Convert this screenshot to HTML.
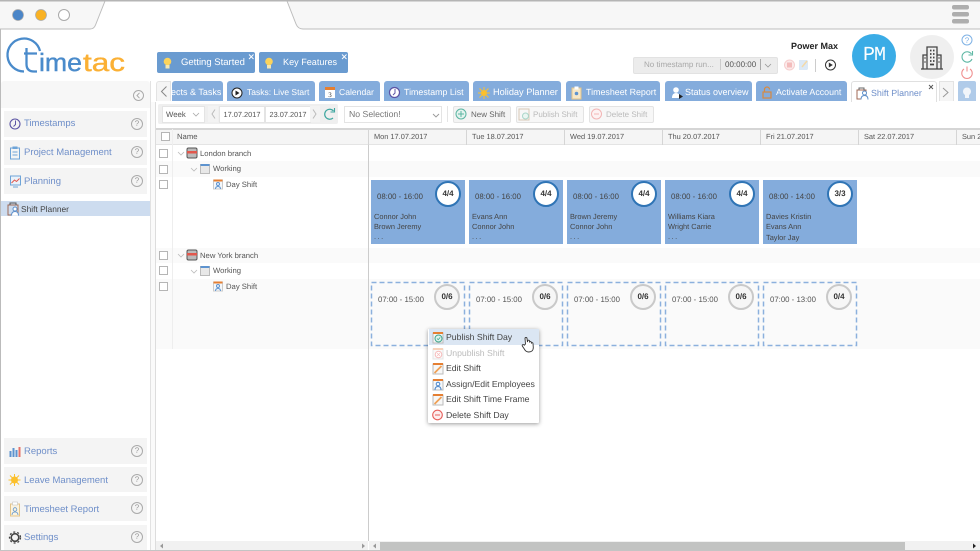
<!DOCTYPE html>
<html><head><meta charset="utf-8"><style>
html,body{margin:0;padding:0;background:#fff}
#p{position:relative;width:980px;height:551px;overflow:hidden;background:#fff;font-family:"Liberation Sans",sans-serif;font-size:9px;color:#555;text-rendering:geometricPrecision;filter:blur(.3px)}
#p div,#p span.a,#p svg{position:absolute}
.t{white-space:nowrap;line-height:12px}
.tab{top:81px;height:20px;background:#84acdc;border-radius:3px 3px 0 0;color:#fff;font-size:9px;line-height:22px;white-space:nowrap;overflow:hidden}
.side{left:4px;width:143px;background:#f4f4f4}
.side .l{left:20px;top:0;color:#6f8fc9;font-size:9.5px;white-space:nowrap}
.q{left:127px;width:10px;height:10px;border:1px solid #aaa;border-radius:50%;color:#999;font-size:8px;line-height:10px;text-align:center}
.cb{left:159px;width:7px;height:7px;border:1px solid #b5b5b5;background:#fff}
.hd{top:129px;height:16px;border-left:1px solid #d5d5d5;line-height:16px;font-size:7.4px;padding-left:5px;color:#555;white-space:nowrap}
.sb{top:180px;width:94px;height:64px;background:#84acdc;color:#444}
.sd{top:282px;width:94px;height:64px;color:#555}
.tm{left:6px;top:12px;font-size:7.8px;white-space:nowrap}
.sd .tm{left:7px;top:13px}
.bd{left:64px;top:1px;width:22px;height:22px;border:2px solid #2f74b5;border-radius:50%;background:#fff;font-weight:bold;font-size:8px;line-height:22px;text-align:center;color:#333}
.sd .bd{left:63px;top:2px;border:2px solid #c9c9c9;background:#f6f6f6}
.nm{left:3px;font-size:7.4px;white-space:nowrap;line-height:11px}
.mi{left:446px;font-size:8.7px;white-space:nowrap;color:#444;line-height:12px}
.btn{top:106px;height:15px;border:1px solid #e3e3e3;background:#f7f7f7;border-radius:2px;line-height:15px;font-size:8px;white-space:nowrap;color:#bbb}
.tr{font-size:7.7px}
</style></head><body><div id="p">

<!-- browser chrome -->
<svg style="left:0;top:0" width="980" height="31">
<rect width="980" height="30" fill="#fff"/>
<path d="M0 0H105L95 25Q94 29 90 29H0Z" fill="#f7f7f7"/>
<path d="M287 0L296 24Q298 29 303 29H980V0Z" fill="#f7f7f7"/>
<path d="M105 1L95.500 25Q94 29 90 29H0M287 1L296 24Q298 29 303 29H980" fill="none" stroke="#bdbdbd"/>
<rect width="980" height="1.500" fill="#b5b5b5"/>
<circle cx="18" cy="15" r="5.500" fill="#4b86c8" stroke="#aaa" stroke-width=".7"/>
<circle cx="41" cy="15" r="5.500" fill="#f9b224" stroke="#aaa" stroke-width=".7"/>
<circle cx="64" cy="15" r="5.500" fill="#fff" stroke="#aaa"/>
<rect x="952" y="5" width="17" height="4.500" rx="2" fill="#aeaeae"/><rect x="952" y="12" width="17" height="4.500" rx="2" fill="#aeaeae"/><rect x="952" y="19" width="17" height="4.500" rx="2" fill="#aeaeae"/>
</svg>
<div style="left:0;top:29px;width:1px;height:522px;background:#bbb"></div>

<!-- logo -->
<svg style="left:0;top:30px" width="135" height="50">
<path d="M24 41.500A16.500 16.500 0 1 1 40 21" fill="none" stroke="#4a8bcb" stroke-width="2.300"/>
<path d="M26.500 18V34Q26.500 41.500 34 41.500H37M24 23.500H37" fill="none" stroke="#4a8bcb" stroke-width="2.300"/>
<text x="39" y="41" font-family="Liberation Sans" font-size="25" fill="#4a8bcb" stroke="#4a8bcb" stroke-width=".4" textLength="43" lengthAdjust="spacingAndGlyphs">ime</text>
<text x="83" y="41" font-family="Liberation Sans" font-size="25" fill="#fbb034" stroke="#fbb034" stroke-width=".4" textLength="42" lengthAdjust="spacingAndGlyphs">tac</text>
</svg>

<!-- tips -->
<div class="tab" style="left:157px;top:52px;width:98px;height:21px;background:#6a9bd0;border-radius:2px;line-height:21px;font-size:9.5px"><span class="a" style="left:24px">Getting Started</span></div>
<div class="tab" style="left:259px;top:52px;width:89px;height:21px;background:#6a9bd0;border-radius:2px;line-height:21px;font-size:9.1px"><span class="a" style="left:24px">Key Features</span></div>
<svg style="left:157px;top:52px" width="195" height="21"><circle cx="10.500" cy="9.500" r="3.800" fill="#fbd35b"/><rect x="8.500" y="13" width="4" height="3.500" fill="#f5e7b0"/><circle cx="112" cy="9.500" r="3.800" fill="#fbd35b"/><rect x="110" y="13" width="4" height="3.500" fill="#f5e7b0"/><path d="M92 2.500l4.500 4.500m0-4.500L92 7M185 2.500l4.500 4.500m0-4.500L185 7" stroke="#fff" stroke-width=".9"/></svg>

<!-- timer -->
<div style="left:633px;top:57px;width:143px;height:15px;background:#ececec;border:1px solid #e2e2e2;border-radius:2px"></div>
<div class="t" style="left:644px;top:59px;font-size:8px;color:#a9a9a9">No timestamp run...</div>
<div class="t" style="left:725px;top:59px;font-size:8px;color:#555">00:00:00</div>
<div style="left:720px;top:59px;width:1px;height:11px;background:#ccc"></div><div style="left:760px;top:59px;width:1px;height:11px;background:#aaa"></div>
<svg style="left:762px;top:58px" width="60" height="16"><path d="M3 6l3 3 3-3" fill="none" stroke="#999" stroke-width=".8"/></svg>
<svg style="left:782px;top:56px" width="60" height="18">
<circle cx="7.500" cy="9" r="5" fill="#fbeaea" stroke="#f6cfcf"/><rect x="5" y="6.500" width="5" height="5" fill="#f3bcbc"/>
<path d="M17 4h8l1 1v8l-1 1h-8z" fill="#dce9f6"/><path d="M20 11l5-6" stroke="#f4d9a8" stroke-width="1.500"/>
<path d="M33.500 3v13" stroke="#ccc"/>
<circle cx="48.500" cy="9" r="5" fill="#fff" stroke="#333"/><path d="M46.800 6.500l4 2.500-4 2.500z" fill="#333"/>
</svg>
<div class="t" style="left:791px;top:40px;font-weight:bold;font-size:9px;color:#222">Power Max</div>
<div style="left:852px;top:34px;width:44px;height:44px;border-radius:50%;background:#3aace6;color:#fff;font-family:'Liberation Mono',monospace;font-size:20px;line-height:44px;text-align:center;letter-spacing:-1px">PM</div>
<div style="left:910px;top:35px;width:44px;height:44px;border-radius:50%;background:#efefef"></div>
<svg style="left:910px;top:35px" width="44" height="44" fill="none" stroke="#444" stroke-width="1.300"><path d="M13 34V20H17M31 34V20H27M17 34V12H27V34M11 34H33"/><path d="M20 15.500h1.500M23 15.500h1.500M20 19h1.500M23 19h1.500M20 22.500h1.500M23 22.500h1.500M20 26h1.500M23 26h1.500M14.500 23h1M14.500 27h1M28.500 23h1M28.500 27h1M20 29.500h4" stroke-width="1.800"/></svg>
<svg style="left:958px;top:32px" width="20" height="50" fill="none">
<circle cx="9" cy="8" r="5" stroke="#7fb2e5"/><text x="9" y="10.800" font-size="8" font-family="Liberation Sans" fill="#7fb2e5" text-anchor="middle">?</text>
<path d="M13.500 22A5.200 5.200 0 1 0 14 27" stroke="#5fb8a5" stroke-width="1.100"/><path d="M14.500 19v4h-4" stroke="#5fb8a5" stroke-width="1.100"/>
<path d="M6 37A5.200 5.200 0 1 0 12 37M9 34.500v5" stroke="#ef8f8f" stroke-width="1.100"/>
</svg>

<!-- tabs -->
<div class="tab" style="left:172px;width:51px"><span class="a" style="left:-1px">ects &amp; Tasks</span></div>
<div style="left:156px;top:81px;width:15px;height:20px;background:#f5f5f5;border:1px solid #e3e3e3;border-bottom:0;box-sizing:border-box;border-radius:3px 0 0 0"></div>
<svg style="left:156px;top:81px" width="15" height="20"><path d="M10.500 5.500L5.500 10.500l5 5" fill="none" stroke="#888"/></svg>
<div class="tab" style="left:227px;width:88px;font-size:8.500px"><span class="a" style="left:20px">Tasks: Live Start</span></div>
<div class="tab" style="left:319px;width:61px;font-size:8.600px"><span class="a" style="left:20px">Calendar</span></div>
<div class="tab" style="left:384px;width:85px;font-size:8.850px"><span class="a" style="left:20px">Timestamp List</span></div>
<div class="tab" style="left:473px;width:88px;font-size:9.200px"><span class="a" style="left:20px">Holiday Planner</span></div>
<div class="tab" style="left:566px;width:94px;font-size:8.900px"><span class="a" style="left:20px">Timesheet Report</span></div>
<div class="tab" style="left:665px;width:87px"><span class="a" style="left:20px">Status overview</span></div>
<div class="tab" style="left:756px;width:91px;font-size:8.850px"><span class="a" style="left:20px">Activate Account</span></div>
<div style="left:851px;top:81px;width:86px;height:21px;background:#fff;border:1px solid #e0e0e0;border-bottom:0;box-sizing:border-box;border-radius:3px 3px 0 0"></div>
<div class="t" style="left:871px;top:87px;color:#6f8fc9;font-size:8.900px">Shift Planner</div>
<div style="left:939px;top:81px;width:15px;height:20px;background:#f5f5f5;border:1px solid #e3e3e3;border-bottom:0;box-sizing:border-box"></div>
<div style="left:958px;top:81px;width:18px;height:20px;background:#b0cbe9;border-radius:2px 2px 0 0"></div>
<svg style="left:150px;top:78px" width="830" height="26">
<circle cx="87" cy="15" r="5" fill="#fff" stroke="#222"/><path d="M85.500 12.500l4 2.500-4 2.500z" fill="#222"/>
<rect x="175" y="9" width="10" height="11" fill="#fff"/><rect x="175" y="9" width="10" height="3" fill="#e57f32"/><text x="180" y="19" font-size="7" font-family="Liberation Serif" fill="#333" text-anchor="middle">3</text>
<circle cx="244.500" cy="14.500" r="5" fill="#fff" stroke="#5c55a5" stroke-width="1.200"/><path d="M245 11v4l-2 2" stroke="#5c55a5" fill="none"/>
<circle cx="334" cy="15" r="3" fill="#fbc02d"/><path d="M334 9v12M328 15h12M329.500 10.500l9 9m0-9l-9 9" stroke="#fbc02d" stroke-width="1"/>
<g transform="translate(-3 0)"><rect x="425" y="10" width="9" height="11" fill="#f6e8c8" stroke="#e3c48a"/><rect x="427.500" y="8.500" width="4" height="3" fill="#fff"/><circle cx="429.500" cy="15.500" r="1.800" fill="#5d93cf"/></g>
<circle cx="526" cy="12" r="2.800" fill="#fff"/><path d="M522 20q0-5 4-5t4 5z" fill="#fff"/><path d="M529 16l4 2.500-4 2.500z" fill="#222"/>
<rect x="613" y="14" width="8" height="6" fill="none" stroke="#d8893f" stroke-width="1.200"/><path d="M614.500 14v-2.500a2.500 2.500 0 0 1 5 0" fill="none" stroke="#d8893f" stroke-width="1.200"/>
<path d="M707 21v-9h9v9z" fill="#fff" stroke="#a06a55"/><path d="M709 12v-2h5v2" fill="none" stroke="#666"/><circle cx="714.500" cy="15" r="2" fill="#fff" stroke="#5d8fcb"/><path d="M711 21.500q0-4 3.500-4t3.500 4" fill="#fff" stroke="#5d8fcb"/>
<path d="M793 10l5 4.500-5 4.500" fill="none" stroke="#999"/>
<path d="M779 7l4 4m0-4l-4 4" stroke="#555" stroke-width=".9"/>
<circle cx="817" cy="13.500" r="4" fill="#f1f5fa"/><rect x="815" y="17" width="4" height="3" fill="#f1f5fa"/>
</svg>

<!-- sidebar -->
<div style="left:1px;top:81px;width:149px;height:27px;background:#f7f7f7;border-radius:3px 3px 0 0"></div>
<div style="left:150px;top:81px;width:1px;height:470px;background:#e2e2e2"></div>
<div style="left:151px;top:102px;width:5px;height:449px;background:#fafafa"></div>
<div style="left:155px;top:102px;width:1px;height:449px;background:#ddd"></div>
<svg style="left:132px;top:89px" width="14" height="13"><circle cx="6.500" cy="6.500" r="5" fill="none" stroke="#aaa"/><path d="M7.500 3.800L5 6.500l2.500 2.700" fill="none" stroke="#aaa"/></svg>

<div class="side" style="top:111px;height:26px"><div class="l" style="line-height:26px">Timestamps</div><div class="q" style="top:7px">?</div></div>
<div class="side" style="top:140px;height:25px"><div class="l" style="line-height:26px">Project Management</div><div class="q" style="top:6px">?</div></div>
<div class="side" style="top:168px;height:26px"><div class="l" style="line-height:27px">Planning</div><div class="q" style="top:7px">?</div></div>
<div style="left:1px;top:201px;width:149px;height:15px;background:#cddcef"></div>
<div class="t" style="left:21px;top:203px;font-size:8.400px;color:#444">Shift Planner</div>
<div class="side" style="top:438px;height:26px"><div class="l" style="line-height:27px">Reports</div><div class="q" style="top:7px">?</div></div>
<div class="side" style="top:467px;height:25px"><div class="l" style="line-height:27px">Leave Management</div><div class="q" style="top:7px">?</div></div>
<div class="side" style="top:496px;height:25px"><div class="l" style="line-height:27px">Timesheet Report</div><div class="q" style="top:6px">?</div></div>
<div class="side" style="top:525px;height:26px"><div class="l" style="line-height:26px">Settings</div><div class="q" style="top:6px">?</div></div>
<svg style="left:0;top:100px" width="30" height="451" fill="none">
<circle cx="15" cy="24" r="5" stroke="#5c55a5" stroke-width="1.100"/><path d="M15.500 20.500v4l-2 2" stroke="#5c55a5"/>
<rect x="10.500" y="48" width="9" height="11" stroke="#6ea4d8"/><rect x="12.500" y="46.500" width="5" height="2.500" fill="#6ea4d8"/><path d="M12.500 52h5M12.500 55h5" stroke="#6ea4d8"/>
<rect x="10.500" y="76" width="10" height="9" fill="#eaf2fa" stroke="#6ea4d8"/><path d="M11.500 83l3-3 2 1.500 3-3" stroke="#e2574c"/><path d="M13 87h5" stroke="#6ea4d8"/>
<rect x="8" y="105" width="10" height="10" stroke="#a06a55"/><path d="M10 105v-2h6v2" stroke="#555"/><circle cx="15" cy="109" r="2" fill="#fff" stroke="#5d8fcb"/><path d="M11.500 115.500q0-4 3.500-4t3.500 4" fill="#fff" stroke="#5d8fcb"/>
<path d="M10.500 357v-6M16.500 357v-7M13.500 357v-9" stroke="#5d93cf" stroke-width="2"/><path d="M19.500 357v-10" stroke="#e5736a" stroke-width="2"/>
<circle cx="14.500" cy="380" r="3.500" fill="#fbc02d"/><path d="M14.500 374v12M8.500 380h12M10 375.500l9 9m0-9l-9 9" stroke="#fbc02d"/>
<rect x="10.500" y="404" width="9" height="12" fill="#fbf3df" stroke="#e3c48a"/><rect x="12.500" y="402" width="5" height="3" fill="#fff" stroke="#bbb" stroke-width=".5"/><circle cx="15" cy="409.500" r="1.800" stroke="#5d93cf" stroke-width=".8"/><path d="M12 415q0-3 3-3t3 3" stroke="#5d93cf" stroke-width=".8"/>
<circle cx="15" cy="437.500" r="3.800" stroke="#444" stroke-width="1.600"/><circle cx="15" cy="437.500" r="5.500" stroke="#444" stroke-width="1.300" stroke-dasharray="2 2"/>
</svg>

<!-- toolbar -->
<div style="left:158px;top:104px;width:180px;height:20px;background:#efefef;border-radius:2px"></div>
<div style="left:162px;top:106px;width:41px;height:15px;background:#fff;border:1px solid #e4e4e4;line-height:15px;font-size:7.800px;text-indent:3px;color:#555">Week</div>
<div style="left:208px;top:106px;width:10px;height:16px;background:#f3f3f3"></div>
<div style="left:219px;top:106px;width:44px;height:15px;background:#fff;border:1px solid #e4e4e4;line-height:15px;font-size:7.400px;text-align:center;color:#555">17.07.2017</div>
<div style="left:265px;top:106px;width:44px;height:15px;background:#fff;border:1px solid #e4e4e4;line-height:15px;font-size:7.400px;text-align:center;color:#555">23.07.2017</div>
<div style="left:310px;top:106px;width:10px;height:16px;background:#f3f3f3"></div>
<div style="left:344px;top:106px;width:96px;height:15px;background:#fff;border:1px solid #e4e4e4;line-height:15px;font-size:8.700px;text-indent:4px;color:#777">No Selection!</div>
<div style="left:447px;top:106px;width:1px;height:16px;background:#e5e5e5"></div>
<div class="btn" style="left:453px;width:56px;color:#666;background:#f4f4f4;text-indent:17px">New Shift</div>
<div class="btn" style="left:516px;width:66px;text-indent:16px">Publish Shift</div>
<div class="btn" style="left:589px;width:63px;text-indent:16px">Delete Shift</div>
<svg style="left:150px;top:100px" width="520" height="26" fill="none">
<path d="M43 13l3 3 3-3" stroke="#aaa" stroke-width=".8"/>
<path d="M65 9.500l-3 4.500 3 4.500M163 9.500l3 4.500-3 4.500" stroke="#bbb"/>
<path d="M283 14l3 3 3-3" stroke="#999" stroke-width=".9"/>
<path d="M183.500 11A5 5 0 1 0 183 18" stroke="#3fa7a0" stroke-width="1.200"/><path d="M184.500 8v4h-4" stroke="#3fa7a0" stroke-width="1.100"/>
<circle cx="311" cy="14" r="5" fill="#e4f3ee" stroke="#5bb5a2"/><path d="M308 14h6M311 11v6" stroke="#5bb5a2"/>
<rect x="369" y="9" width="10" height="11" fill="#f7f7f7" stroke="#d9c9b7"/><circle cx="375.500" cy="16" r="3" fill="#eaf6f2" stroke="#a9d6c9"/>
<circle cx="446.500" cy="14" r="5" fill="#fdf2f2" stroke="#f2b5b5"/><path d="M444 14h5" stroke="#f2b5b5"/>
</svg>

<!-- grid -->
<div style="left:156px;top:128px;width:824px;height:17px;background:#f5f5f5;border-top:2px solid #d5d5d5;box-sizing:border-box;border-bottom:1px solid #e4e4e4"></div>
<div style="left:156px;top:161px;width:824px;height:16px;background:#fafafa"></div>
<div style="left:156px;top:248px;width:824px;height:15px;background:#fafafa"></div>
<div style="left:156px;top:279px;width:824px;height:70px;background:#fafafa"></div>
<div style="left:172px;top:129px;width:1px;height:220px;background:#eee"></div>
<div style="left:368px;top:129px;width:1px;height:412px;background:#ccc"></div>
<div class="cb" style="left:161px;top:132px"></div>
<div class="t tr" style="left:177px;top:131px">Name</div>
<div class="hd" style="left:368px;width:92px">Mon 17.07.2017</div>
<div class="hd" style="left:466px;width:92px">Tue 18.07.2017</div>
<div class="hd" style="left:564px;width:92px">Wed 19.07.2017</div>
<div class="hd" style="left:662px;width:92px">Thu 20.07.2017</div>
<div class="hd" style="left:760px;width:92px">Fri 21.07.2017</div>
<div class="hd" style="left:858px;width:92px">Sat 22.07.2017</div>
<div class="hd" style="left:956px;width:19px;overflow:hidden">Sun 23.07.2017</div>

<div class="cb" style="top:149px"></div><div class="cb" style="top:165px"></div><div class="cb" style="top:180px"></div>
<div class="cb" style="top:251px"></div><div class="cb" style="top:266px"></div><div class="cb" style="top:282px"></div>
<div class="t tr" style="left:200px;top:148px">London branch</div>
<div class="t tr" style="left:213px;top:163px">Working</div>
<div class="t tr" style="left:226px;top:179px">Day Shift</div>
<div class="t tr" style="left:200px;top:250px">New York branch</div>
<div class="t tr" style="left:213px;top:265px">Working</div>
<div class="t tr" style="left:226px;top:281px">Day Shift</div>
<svg style="left:172px;top:145px" width="70" height="150" fill="none">
<path d="M6 7l3 3 3-3M19 23l3 3 3-3M6 109l3 3 3-3M19 125l3 3 3-3" stroke="#bbb" stroke-width=".8"/>
<rect x="15" y="3" width="10" height="10" rx="1.500" fill="#bbb" stroke="#555"/><rect x="15" y="6" width="10" height="2.500" fill="#e2574c"/>
<rect x="15" y="105" width="10" height="10" rx="1.500" fill="#bbb" stroke="#555"/><rect x="15" y="108" width="10" height="2.500" fill="#e2574c"/>
<rect x="28.500" y="19.500" width="9" height="9" fill="#e8e8e8" stroke="#bbb"/><rect x="28.500" y="19" width="9" height="2" fill="#5d93cf"/>
<rect x="28.500" y="121.500" width="9" height="9" fill="#e8e8e8" stroke="#bbb"/><rect x="28.500" y="121" width="9" height="2" fill="#5d93cf"/>
<rect x="41.500" y="35" width="9" height="9" fill="#f3f7fb" stroke="#ccc"/><rect x="41.500" y="34.500" width="9" height="2" fill="#e57f32"/><circle cx="46" cy="39" r="1.500" stroke="#5d93cf"/><path d="M43.500 44q0-2.500 2.500-2.500T48.500 44" stroke="#5d93cf"/>
<rect x="41.500" y="137" width="9" height="9" fill="#f3f7fb" stroke="#ccc"/><rect x="41.500" y="136.500" width="9" height="2" fill="#e57f32"/><circle cx="46" cy="141" r="1.500" stroke="#5d93cf"/><path d="M43.500 146q0-2.500 2.500-2.500T48.500 146" stroke="#5d93cf"/>
</svg>

<!-- shifts -->
<div class="sb" style="left:371px"><div class="tm">08:00 - 16:00</div><div class="bd">4/4</div><div class="nm" style="top:31px">Connor John</div><div class="nm" style="top:41px">Brown Jeremy</div><div class="nm" style="top:51px;letter-spacing:1.500px">...</div></div>
<div class="sb" style="left:469px"><div class="tm">08:00 - 16:00</div><div class="bd">4/4</div><div class="nm" style="top:31px">Evans Ann</div><div class="nm" style="top:41px">Connor John</div><div class="nm" style="top:51px;letter-spacing:1.500px">...</div></div>
<div class="sb" style="left:567px"><div class="tm">08:00 - 16:00</div><div class="bd">4/4</div><div class="nm" style="top:31px">Brown Jeremy</div><div class="nm" style="top:41px">Connor John</div><div class="nm" style="top:51px;letter-spacing:1.500px">...</div></div>
<div class="sb" style="left:665px"><div class="tm">08:00 - 16:00</div><div class="bd">4/4</div><div class="nm" style="top:31px">Williams Kiara</div><div class="nm" style="top:41px">Wright Carrie</div><div class="nm" style="top:51px;letter-spacing:1.500px">...</div></div>
<div class="sb" style="left:763px"><div class="tm">08:00 - 14:00</div><div class="bd">3/3</div><div class="nm" style="top:31px">Davies Kristin</div><div class="nm" style="top:41px">Evans Ann</div><div class="nm" style="top:52px">Taylor Jay</div></div>

<svg style="left:365px;top:276px" width="500" height="76" fill="none" stroke="#8cb0dd" stroke-width="1.500" stroke-dasharray="5 3">
<rect x="6.500" y="6.500" width="93" height="63"/><rect x="104.500" y="6.500" width="93" height="63"/><rect x="202.500" y="6.500" width="93" height="63"/><rect x="300.500" y="6.500" width="93" height="63"/><rect x="398.500" y="6.500" width="93" height="63"/>
</svg>
<div class="sd" style="left:371px"><div class="tm">07:00 - 15:00</div><div class="bd">0/6</div></div>
<div class="sd" style="left:469px"><div class="tm">07:00 - 15:00</div><div class="bd">0/6</div></div>
<div class="sd" style="left:567px"><div class="tm">07:00 - 15:00</div><div class="bd">0/6</div></div>
<div class="sd" style="left:665px"><div class="tm">07:00 - 15:00</div><div class="bd">0/6</div></div>
<div class="sd" style="left:763px"><div class="tm">07:00 - 13:00</div><div class="bd">0/4</div></div>

<!-- context menu -->
<div style="left:428px;top:329px;width:111px;height:94px;background:#fff;box-shadow:0 1px 4px rgba(0,0,0,.4);border-radius:1px"></div>
<div style="left:429px;top:329px;width:110px;height:16px;background:#dbe6f3"></div>
<div class="mi" style="top:331px">Publish Shift Day</div>
<div class="mi" style="top:347px;color:#bbb">Unpublish Shift</div>
<div class="mi" style="top:362px">Edit Shift</div>
<div class="mi" style="top:378px">Assign/Edit Employees</div>
<div class="mi" style="top:393px">Edit Shift Time Frame</div>
<div class="mi" style="top:409px">Delete Shift Day</div>
<svg style="left:428px;top:329px" width="115" height="94" fill="none">
<rect x="5" y="4" width="10" height="10" fill="#f5f5f5" stroke="#bbb"/><rect x="5" y="3" width="10" height="2" fill="#e57f32"/><circle cx="10.500" cy="9.500" r="3.500" fill="#dff2ec" stroke="#3fa78f"/><path d="M9 9.500l1.200 1.200 2-2.300" stroke="#3fa78f" stroke-width=".8"/>
<g opacity=".5"><rect x="5" y="20" width="10" height="10" fill="#f5f5f5" stroke="#ccc"/><rect x="5" y="19" width="10" height="2" fill="#f0a779"/><circle cx="10.500" cy="25.500" r="3.300" fill="#fff" stroke="#e77"/><path d="M9 24l3 3m0-3l-3 3" stroke="#e77" stroke-width=".7"/></g>
<rect x="5" y="35" width="10" height="10" fill="#f7f7f7" stroke="#bbb"/><rect x="5" y="34" width="10" height="2" fill="#e57f32"/><path d="M6.500 44l7-7" stroke="#efa055" stroke-width="1.800"/>
<rect x="5" y="51" width="10" height="10" fill="#f3f7fb" stroke="#bbb"/><rect x="5" y="50" width="10" height="2" fill="#e57f32"/><circle cx="10" cy="55" r="1.800" stroke="#4a85c9"/><path d="M7 61q0-3.500 3-3.500t3 3.500" stroke="#4a85c9"/>
<rect x="5" y="66" width="10" height="10" fill="#f7f7f7" stroke="#bbb"/><rect x="5" y="65" width="10" height="2" fill="#e57f32"/><path d="M6.500 75l7-7" stroke="#efa055" stroke-width="1.800"/>
<circle cx="9.500" cy="86" r="4.800" fill="#fdeeee" stroke="#e6605c" stroke-width="1.100"/><path d="M7 86h5" stroke="#e6605c"/>
<path d="M97.500 15l-.5-5.500a1 1 0 0 1 2 0l.5 3.500.2-1.300a1 1 0 0 1 1.800.2l.1 1a1 1 0 0 1 1.700.3l.1.800a.9.900 0 0 1 1.600.5l.3 4c0 3-2 4.500-4.500 4.500s-3.500-1-4.500-3l-2-3c-.5-1.200 1-2 2-.8z" fill="#fff" stroke="#333" stroke-width=".9"/>
</svg>

<!-- scrollbars -->
<div style="left:156px;top:541px;width:212px;height:9px;background:#f1f1f1"></div>
<div style="left:369px;top:541px;width:611px;height:9px;background:#f1f1f1"></div>
<div style="left:380px;top:542px;width:525px;height:9px;background:#c2c3c2"></div>
<svg style="left:150px;top:540px" width="830" height="11"><path d="M10 6l3-2.500v5zM212 3.500l3 2.500-3 2.500zM223 6l3-2.500v5z" fill="#999"/><path d="M823 3.500l3 2.500-3 2.500z" fill="#222"/></svg>
<div style="left:0;top:550px;width:980px;height:1px;background:#c4c4c4"></div>
</div></body></html>
